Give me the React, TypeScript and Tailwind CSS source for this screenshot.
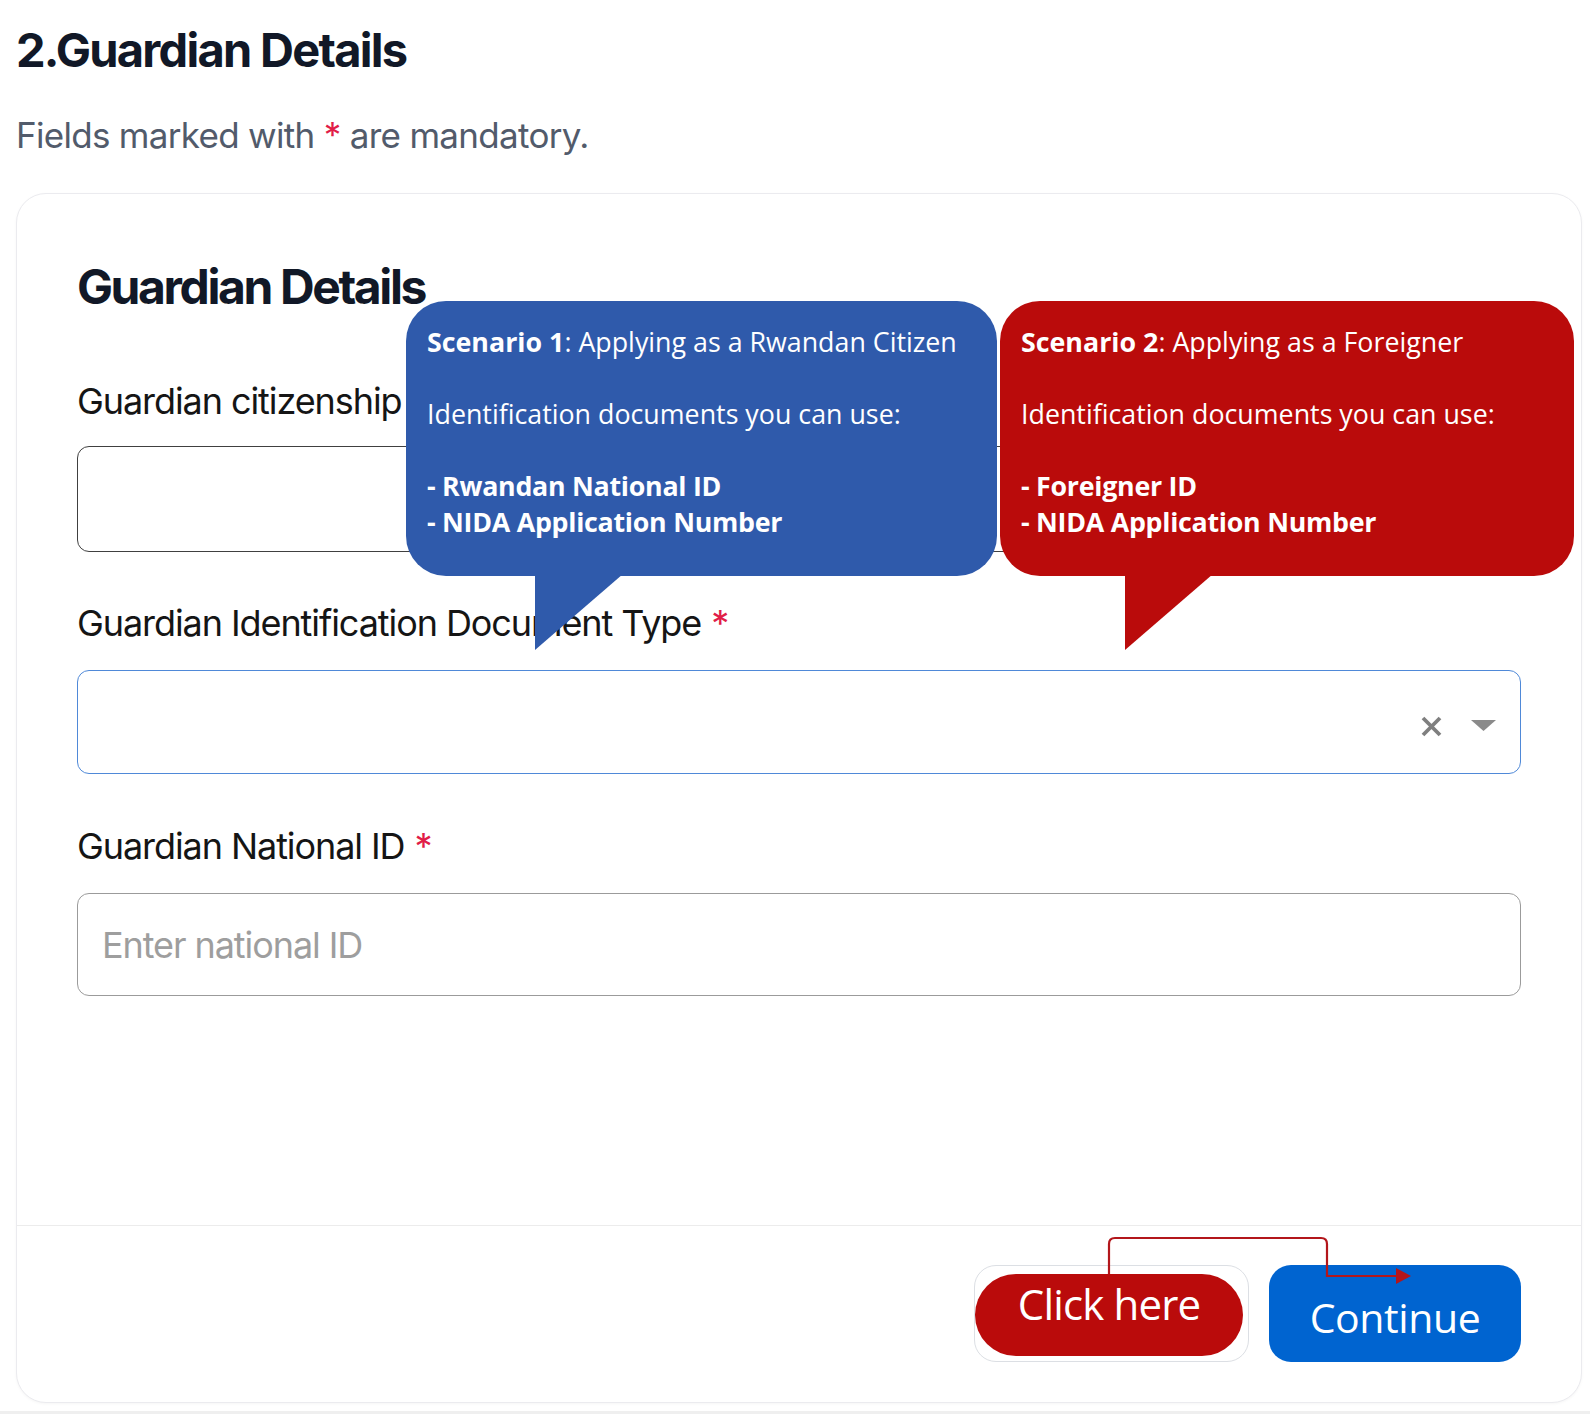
import { useState } from "react";

const sans = "font-['Inter','Noto_Sans',sans-serif]";
const bubbleFont = "font-['Open_Sans','Noto_Sans',sans-serif]";

function Req() {
  return <span className="ml-[10px] text-[#e11d48]">*</span>;
}

function Bubble({
  color,
  className,
  tailLeft,
  title,
  items,
}: {
  color: string;
  className: string;
  tailLeft: string;
  title: string;
  items: string[];
}) {
  return (
    <div className={`absolute top-[301px] h-[275px] rounded-[40px] pl-[21px] pt-[23px] text-white text-[26.8px] leading-[36px] ${bubbleFont} ${color} ${className}`}>
      <p>
        <b>{title}</b>
        {title.includes("1") ? ": Applying as a Rwandan Citizen" : ": Applying as a Foreigner"}
      </p>
      <p className="mt-[36px]">Identification documents you can use:</p>
      <div className="mt-[36px] font-bold tracking-[-0.01em]">
        {items.map((i) => (
          <p key={i}>- {i}</p>
        ))}
      </div>
      <svg className={`absolute top-[273px] ${tailLeft}`} width="90" height="77" viewBox="0 0 90 77">
        <polygon points="0,0 88,0 0,76" className={color === "bg-[#2f5aab]" ? "fill-[#2f5aab]" : "fill-[#ba0b0b]"} />
      </svg>
    </div>
  );
}

export default function App() {
  const [nid, setNid] = useState("");

  return (
    <div className={`relative w-[1590px] min-h-[1414px] bg-white ${sans}`}>
      <div className="pl-[16px] pr-[8px] pt-[26px] pb-[8px]">
        <h1 className="text-[47px] leading-[47px] font-bold tracking-[-0.037em] text-[#111827]">2.Guardian Details</h1>
        <p className="mt-[45px] text-[35px] leading-[35px] tracking-[-0.02em] text-[#525b6b]">
          Fields marked with <span className="text-[#e11d48]">*</span> are mandatory.
        </p>

        <div className="mt-[40px] rounded-[30px] border border-[#ebebef] shadow-[0_1px_3px_rgba(0,0,0,0.04)] bg-white">
          <div className="px-[60px] pt-[69px] pb-[229px]">
            <h2 className="text-[48px] leading-[48px] font-bold tracking-[-0.05em] text-[#111827]">Guardian Details</h2>

            <label className="block mt-[72px] text-[36px] leading-[36px] tracking-[-0.03em] text-[#151515]">Guardian citizenship</label>
            <div className="mt-[27px] h-[106px] rounded-[12px] border-[1.5px] border-[#404040]" />

            <label className="block mt-[53px] text-[36px] leading-[36px] tracking-[-0.03em] text-[#151515]">
              Guardian Identification Document Type<Req />
            </label>
            <div className="mt-[29px] h-[104px] rounded-[12px] border-[1.5px] border-[#4f89d8] flex items-center justify-end pr-[24px] gap-[28px]">
              <svg width="23" height="23" viewBox="0 0 23 23" className="mt-[8px]">
                <path d="M3 3 L20 20 M20 3 L3 20" stroke="#7f7f7f" strokeWidth="3.8" />
              </svg>
              <svg width="25" height="11" viewBox="0 0 25 11" className="mt-[6px]">
                <polygon points="0,0 25,0 12.5,11" fill="#8a8a8a" />
              </svg>
            </div>

            <label className="block mt-[54px] text-[36px] leading-[36px] tracking-[-0.03em] text-[#151515]">
              Guardian National ID<Req />
            </label>
            <input
              value={nid}
              onChange={(e) => setNid(e.target.value)}
              placeholder="Enter national ID"
              className="mt-[29px] w-full h-[103px] rounded-[12px] border-[1.5px] border-[#9b9b9b] px-[24px] text-[36px] tracking-[-0.03em] placeholder:text-[#9e9e9e] outline-none"
            />
          </div>

          <div className="border-t border-[#ececec] px-[60px] pt-[39px] pb-[40px] flex justify-end gap-[20px]">
            <div className="relative w-[275px] h-[97px] rounded-[22px] border border-[#dcdfe4]">
              <div className={`absolute left-0 top-[8px] w-[268px] h-[82px] rounded-full bg-[#ba0b0b] flex items-center justify-center pb-[24px] text-white text-[42px] tracking-[-0.02em] ${bubbleFont}`}>
                Click here
              </div>
            </div>
            <button className={`w-[252px] h-[97px] rounded-[22px] bg-[#0064d0] pt-[8px] text-white text-[41px] tracking-[-0.01em] ${bubbleFont}`}>Continue</button>
          </div>
        </div>
      </div>
      <div className="h-[5px] bg-[#efefef]" />

      <Bubble
        color="bg-[#2f5aab]"
        className="left-[406px] w-[591px]"
        tailLeft="left-[129px]"
        title="Scenario 1"
        items={["Rwandan National ID", "NIDA Application Number"]}
      />
      <Bubble
        color="bg-[#ba0b0b]"
        className="left-[1000px] w-[574px] pl-[20px]"
        tailLeft="left-[125px]"
        title="Scenario 2"
        items={["Foreigner ID", "NIDA Application Number"]}
      />

      <svg className="absolute left-0 top-0 pointer-events-none" width="1590" height="1414">
        <path d="M1109 1274 V1244 Q1109 1238 1115 1238 H1321 Q1327 1238 1327 1244 V1276 H1398" fill="none" stroke="#b3161b" strokeWidth="2.2" />
        <polygon points="1396,1268 1411,1276 1396,1284" fill="#b3161b" />
      </svg>
    </div>
  );
}
